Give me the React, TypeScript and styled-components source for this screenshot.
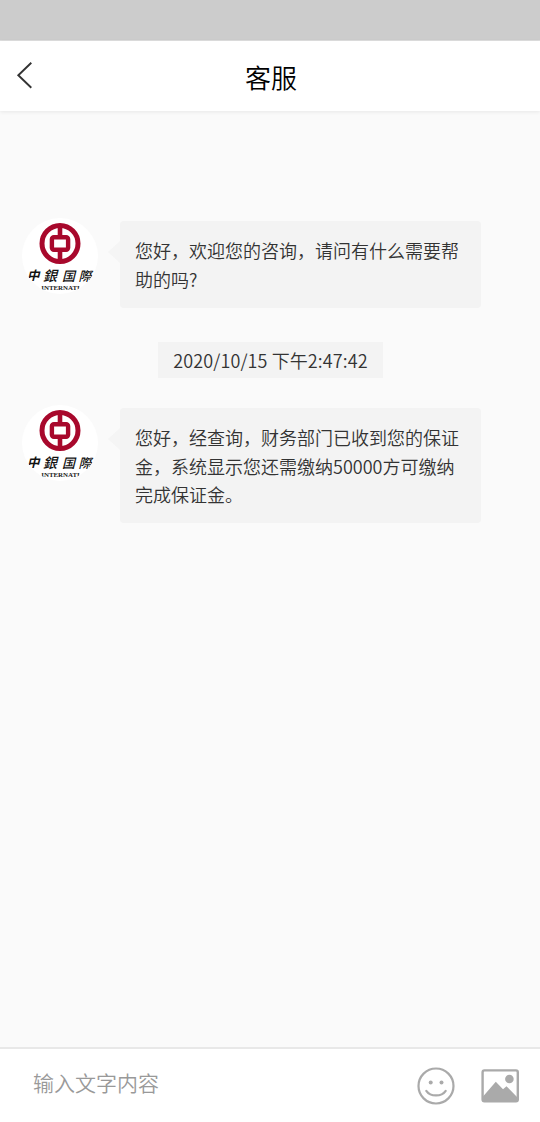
import styled, { createGlobalStyle } from "styled-components";

type Message = {
    kind: "message" | "time";
    text: string;
}

const messages: Message[] = [
    { kind: "message", text: "您好，欢迎您的咨询，请问有什么需要帮助的吗?" },
    { kind: "time", text: "2020/10/15 下午2:47:42" },
    { kind: "message", text: "您好，经查询，财务部门已收到您的保证金，系统显示您还需缴纳50000方可缴纳完成保证金。" },
];

function BankLogo() {
    return (
        <LogoSvg viewBox="0 0 76 76">
            <circle cx="38" cy="25.5" r="18" fill="none" stroke="#a8082c" strokeWidth="5" />
            <path d="M38 7v11M38 33v11" stroke="#a8082c" strokeWidth="4.6" />
            <rect x="29.9" y="19.2" width="16.2" height="12.6" rx="2" fill="none" stroke="#a8082c" strokeWidth="4.4" />
            <LogoName x="5" y="62" fontSize="12.5" fontWeight="bold">中</LogoName>
            <LogoName x="21" y="63.3" fontSize="14" fontWeight="500">銀</LogoName>
            <LogoName x="40" y="63" fontSize="13" fontWeight="500">国</LogoName>
            <LogoName x="56.5" y="63" fontSize="13" fontWeight="500">際</LogoName>
            <LogoCaption x="38.5" y="72" textAnchor="middle">INTERNATI</LogoCaption>
        </LogoSvg>
    );
}

function ChatMessage(props: { text: string }) {
    return (
        <MessageRow>
            <Avatar>
                <BankLogo />
            </Avatar>
            <Bubble>{props.text}</Bubble>
        </MessageRow>
    );
}

export default function App() {
    return (
        <>
            <GlobalStyle />
            <Page>
                <StatusBar />
                <Header>
                    <BackButton aria-label="返回">
                        <svg width="20" height="30" viewBox="0 0 20 30" fill="none" stroke="#333" strokeWidth="1.9">
                            <path d="M16.3 2.8L3.3 15.2L16.3 27.8" />
                        </svg>
                    </BackButton>
                    <Title>客服</Title>
                </Header>
                <MessageList>
                    {messages.map((item) => item.kind === "time"
                        ? <TimeLabel key={item.text}>{item.text}</TimeLabel>
                        : <ChatMessage key={item.text} text={item.text} />
                    )}
                </MessageList>
                <Footer>
                    <MessageInput placeholder="输入文字内容" />
                    <IconButton aria-label="表情">
                        <svg width="38" height="38" viewBox="0 0 38 38" fill="none" stroke="#aaa" strokeWidth="2.2">
                            <circle cx="19" cy="19" r="17.5" />
                            <path d="M9.3 23.8C13.5 30 24.5 30 28.7 23.8" strokeLinecap="round" />
                            <circle cx="13.7" cy="15.5" r="2" fill="#aaa" stroke="none" />
                            <circle cx="24.5" cy="15.5" r="2" fill="#aaa" stroke="none" />
                        </svg>
                    </IconButton>
                    <IconButton aria-label="图片">
                        <svg width="38" height="34" viewBox="0 0 38 34" fill="#aaa">
                            <rect x="1.6" y="1.4" width="35.2" height="31" rx="1.8" fill="none" stroke="#aaa" strokeWidth="2.4" />
                            <circle cx="28.4" cy="10" r="4.3" />
                            <path d="M2 27.5L14.8 12.8L22 20.3L25.5 17.2L36 28V32.5H2Z" />
                        </svg>
                    </IconButton>
                </Footer>
            </Page>
        </>
    );
}

const GlobalStyle = createGlobalStyle`
    * {
        box-sizing: border-box;
    }

    body {
        margin: 0;
        font-family: "Noto Sans CJK SC", sans-serif;
        font-weight: 350;
        color: #333;
    }
`;

const Page = styled.div`
    display: flex;
    flex-direction: column;
    height: 1122px;
    background-color: #fafafa;
`;

const StatusBar = styled.div`
    height: 41px;
    flex-shrink: 0;
    background-color: #ccc;
    border-bottom: 1px solid #dedede;
`;

const Header = styled.header`
    display: grid;
    grid-template-columns: 60px 1fr 60px;
    align-items: center;
    height: 70px;
    flex-shrink: 0;
    background-color: #fff;
    box-shadow: 0 1px 4px rgba(0, 0, 0, .08);
`;

const BackButton = styled.button`
    display: flex;
    margin-bottom: 2px;
    padding: 0 0 0 15px;
    border: 0;
    background: none;
`;

const Title = styled.h1`
    margin: 1px 0 0 2px;
    font-size: 26px;
    line-height: 38px;
    font-weight: 350;
    text-align: center;
    color: #000;
`;

const MessageList = styled.main`
    display: flex;
    flex-direction: column;
    align-items: flex-start;
    flex: 1;
    padding: 107px 0 0 22px;
`;

const MessageRow = styled.div`
    display: flex;
    align-items: flex-start;
    gap: 22px;
`;

const Avatar = styled.div`
    width: 76px;
    height: 76px;
    border-radius: 50%;
    background-color: #fff;
    overflow: hidden;
`;

const LogoSvg = styled.svg`
    display: block;
    width: 76px;
    height: 76px;
`;

const LogoName = styled.text`
    font-family: "Noto Sans CJK TC", sans-serif;
    font-style: italic;
    fill: #111;
`;

const LogoCaption = styled.text`
    font-family: "Liberation Serif", serif;
    font-size: 6.9px;
    font-weight: bold;
    fill: #222;
`;

const Bubble = styled.div`
    position: relative;
    width: 361.4px;
    margin-top: 3px;
    padding: 15.3px 15px 13.7px;
    border-radius: 4px;
    background-color: #f3f3f3;
    font-size: 18px;
    line-height: 28.8px;

    &::before {
        content: "";
        position: absolute;
        left: -12px;
        top: 20px;
        border: 11px solid transparent;
        border-left: 0;
        border-right: 12px solid #f5f5f5;
    }
`;

const TimeLabel = styled.div`
    align-self: center;
    margin: 34px 21px 27px 0;
    padding: 0 15px;
    background-color: #f3f3f3;
    font-size: 18px;
    letter-spacing: .1px;
    line-height: 36px;
`;

const Footer = styled.footer`
    display: flex;
    align-items: center;
    height: 75px;
    flex-shrink: 0;
    padding: 0 21px 0 33px;
    border-top: 2px solid #e8e8e8;
    background-color: #fff;
`;

const MessageInput = styled.input`
    flex: 1;
    min-width: 0;
    padding: 0 0 7px;
    border: 0;
    outline: none;
    font-family: inherit;
    font-size: 21px;
    font-weight: inherit;

    &::placeholder {
        color: #999;
    }
`;

const IconButton = styled.button`
    display: flex;
    margin-left: 26px;
    padding: 0;
    border: 0;
    background: none;
`;
